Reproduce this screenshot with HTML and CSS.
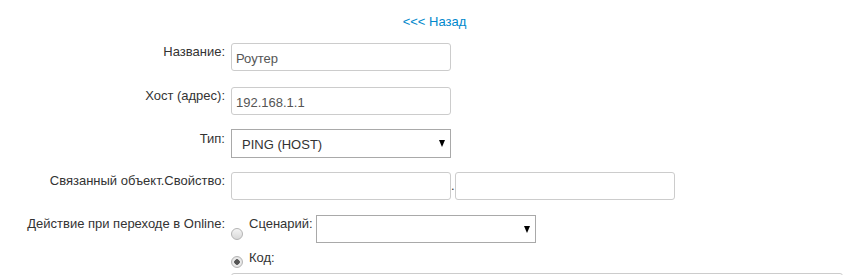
FILE: index.html
```html
<!DOCTYPE html>
<html lang="ru">
<head>
    <meta charset="UTF-8">
    <title>Устройство</title>
    <link rel="stylesheet" href="styles.css">
</head>
<body>
    <div class="page">
        <!-- назад -->
        <div class="back"><a href="#">&lt;&lt;&lt; Назад</a></div>
        <form class="form">
            <div class="row">
                <label class="label">Название:</label>
                <div class="field"><input type="text" class="text" value="Роутер"></div>
            </div>
            <div class="row row-tight">
                <label class="label">Хост (адрес):</label>
                <div class="field"><input type="text" class="text" value="192.168.1.1"></div>
            </div>
            <div class="row row-tight">
                <label class="label label-low">Тип:</label>
                <div class="field">
                    <select class="select">
                        <option>PING (HOST)</option>
                    </select>
                </div>
            </div>
            <div class="row row-mid">
                <label class="label">Связанный объект.Свойство:</label>
                <div class="field pair">
                    <input type="text" class="text">
                    <span class="dot">.</span>
                    <input type="text" class="text">
                </div>
            </div>
            <div class="row">
                <label class="label">Действие при переходе в Online:</label>
                <div class="field">
                    <div class="choice">
                        <input type="radio" name="action" class="radio radio-low">
                        <span class="choice-text">Сценарий:</span>
                        <select class="select select-script">
                            <option></option>
                        </select>
                    </div>
                    <div class="choice choice-code">
                        <input type="radio" name="action" class="radio" checked>
                        <span class="choice-text">Код:</span>
                    </div>
                    <textarea class="code"></textarea>
                </div>
            </div>
        </form>
    </div>
</body>
</html>
```

FILE: styles.css
```css
/* общие */
body {
    margin: 0;
    font-family: "Liberation Sans", Arial, sans-serif;
    font-size: 13px;
    line-height: 18px;
    color: #333;
    background: #fff;
}
.page {
    padding-top: 13px;
    overflow: hidden;
}
/* ссылка назад */
.back {
    text-align: center;
    padding-left: 26px;
}
.back a {
    color: #0088cc;
    text-decoration: none;
}
/* форма */
.form {
    margin-top: 12px;
}
.row {
    display: flex;
    align-items: flex-start;
    margin-bottom: 16px;
}
.row-tight {
    margin-bottom: 14px;
}
.row-mid {
    margin-bottom: 15px;
}
.label {
    width: 225px;
    flex-shrink: 0;
    text-align: right;
    margin-right: 6px;
}
.label-low {
    padding-top: 1px;
}
.field {
    flex: 1;
}
.text {
    box-sizing: border-box;
    width: 220px;
    height: 28px;
    margin: 0;
    padding: 5px 4px 3px;
    border: 1px solid #ccc;
    border-radius: 3px;
    font-family: inherit;
    font-size: 13px;
    color: #555;
    background: #fff;
    outline: none;
}
.select {
    box-sizing: border-box;
    width: 220px;
    height: 29px;
    margin: 0;
    padding: 2px 20px 0 10px;
    border: 1px solid #a9a9a9;
    border-radius: 0;
    font-family: inherit;
    font-size: 13px;
    color: #333;
    background: #fff url("data:image/svg+xml,%3Csvg xmlns='http://www.w3.org/2000/svg' width='6' height='7'%3E%3Cpath d='M0 0h6L3 7z' fill='%23000'/%3E%3C/svg%3E") no-repeat right 5px center;
    -webkit-appearance: none;
    appearance: none;
}
.pair {
    display: flex;
    align-items: center;
}
.dot {
    line-height: 14px;
}
/* выбор действия */
.choice {
    display: flex;
    align-items: flex-start;
}
.choice-code {
    margin-top: 6px;
}
.choice-text {
    margin-right: 3px;
}
.radio {
    -webkit-appearance: none;
    appearance: none;
    box-sizing: border-box;
    width: 12px;
    height: 12px;
    margin: 7px 6px 0 0;
    border: 1px solid #b4b4b4;
    border-radius: 50%;
    background: linear-gradient(#f4f4f4, #d9d9d9);
}
.radio-low {
    margin-top: 13px;
}
.radio:checked {
    background: radial-gradient(circle, #555 0, #555 2.5px, #eee 3px, #d6d6d6 100%);
}
.select-script {
    height: 28px;
}
.code {
    display: block;
    box-sizing: border-box;
    width: 612px;
    height: 120px;
    margin-top: 5px;
    border: 1px solid #ccc;
    border-radius: 3px;
    resize: none;
}
```
